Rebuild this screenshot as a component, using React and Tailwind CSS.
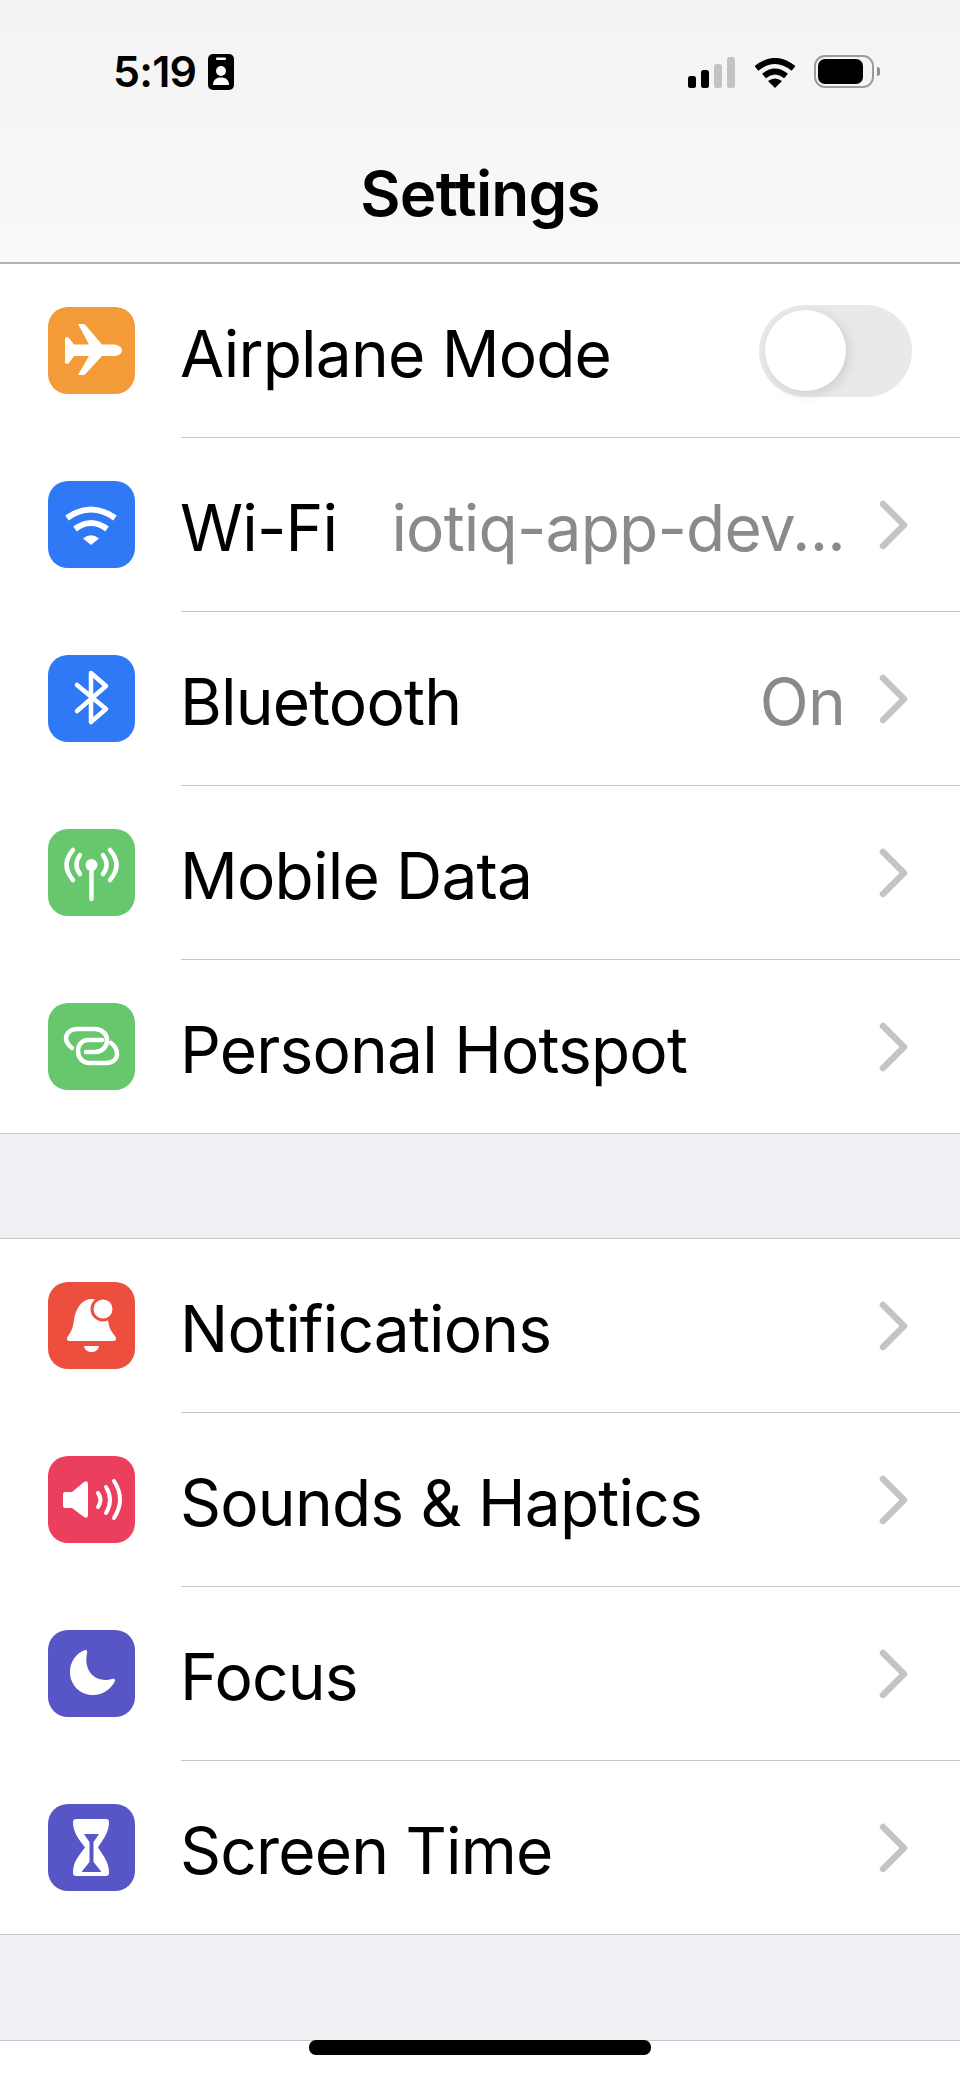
const iconPaths = {
  plane: (
    <path
      fill="#fff"
      d="M74 43.500C74 40 70 37.500 65 37.500H54L37 17.500Q36.500 17 35 17H30L41 37.500H26L21 31Q18 29 17 31.500V55.500Q18 58 21 56L26 49H41L30 68H35Q36.500 68 37 67.500L54 49H65C70 49 74 47 74 43.500Z"
    />
  ),
  wifi: (
    <g fill="none" stroke="#fff" strokeWidth="6">
      <path d="M19 37Q43 20 67 37" />
      <path d="M27 48Q43 36 59 48" />
      <path d="M35 57.500Q43 51 51 57.500L43 64Z" fill="#fff" stroke="none" />
    </g>
  ),
  bluetooth: (
    <path
      fill="none"
      stroke="#fff"
      strokeWidth="4.500"
      strokeLinecap="round"
      strokeLinejoin="round"
      d="M29 30L58 54L43 67V18L58 31L29 56"
    />
  ),
  mobile: (
    <g fill="none" stroke="#fff" strokeWidth="4.500" strokeLinecap="round">
      <circle cx="43.500" cy="36" r="6" fill="#fff" stroke="none" />
      <path d="M43.500 36V70" />
      <path d="M32 26Q25 36 32 45" />
      <path d="M55 26Q62 36 55 45" />
      <path d="M25 21Q12 36 25 51" />
      <path d="M62 21Q75 36 62 51" />
    </g>
  ),
  hotspot: (
    <g fill="none" stroke="#fff" strokeWidth="4.500" strokeLinecap="round">
      <path d="M24 45C20 42 18 38 18 35C18 30 23 26 29 26H47C54 26 59 31 59 37C59 44 54 49 47 49H38" />
      <path d="M54 37H40C34 37 30 42 30 48C30 55 35 60 41 60H58C65 60 69 56 69 51C69 47 67 43 63 40" />
    </g>
  ),
  bell: (
    <g>
      <path
        fill="#fff"
        d="M44 17C33 17 28 27 26 38C25 46 23 50 20 54C18 57 19 59 22 59H65C68 59 69 57 67 54C63 49 61 46 60 38C58 27 54 17 44 17Z"
      />
      <path fill="#fff" d="M36 64H51C50 72 37 72 36 64Z" />
      <circle cx="55" cy="27" r="12.500" fill="#ec4f3d" />
      <circle cx="55" cy="27" r="9.500" fill="#fff" />
    </g>
  ),
  sound: (
    <g>
      <path
        fill="#fff"
        d="M17 36H24L36 26Q40 24 40 28V59Q40 63 36 61L24 52H17Q15 52 15 50V38Q15 36 17 36Z"
      />
      <g fill="none" stroke="#fff" strokeWidth="4" strokeLinecap="round">
        <path d="M50 37Q55 44 50 51" />
        <path d="M58 31Q66 44 58 57" />
        <path d="M66 25Q78 43.500 66 62" />
      </g>
    </g>
  ),
  moon: (
    <path
      fill="#fff"
      d="M37 20C28 23 22 32 22 42C22 55 32 65 45 65C55 65 63 59 67 51C67.500 49 66 48.500 64 49C50 53 35 44 39 23C39.500 20.500 38.500 19.500 37 20Z"
    />
  ),
  screenTime: (
    <g>
      <path
        fill="#fff"
        d="M28 15H58Q61 15 61 18C61 28 56 34 50 43.500C56 53 61 58 61 69Q61 72 58 72H28Q25 72 25 69C25 58 30 53 37 43.500C30 34 25 28 25 18Q25 15 28 15Z"
      />
      <path
        fill="#5856c6"
        d="M36 30H51L47 36L45.500 38V58L52 66Q54 68 52 68H35Q33 68 35 66L41.500 58V38L40 36Z"
      />
    </g>
  ),
}

const group1 = [
  { label: 'Airplane Mode', icon: 'plane', bg: 'bg-[#f29b38]', toggle: true },
  { label: 'Wi-Fi', icon: 'wifi', bg: 'bg-[#3079f6]', value: 'iotiq-app-dev...' },
  { label: 'Bluetooth', icon: 'bluetooth', bg: 'bg-[#3079f6]', value: 'On' },
  { label: 'Mobile Data', icon: 'mobile', bg: 'bg-[#66c76c]' },
  { label: 'Personal Hotspot', icon: 'hotspot', bg: 'bg-[#66c76c]' },
]

const group2 = [
  { label: 'Notifications', icon: 'bell', bg: 'bg-[#ec4f3d]' },
  { label: 'Sounds & Haptics', icon: 'sound', bg: 'bg-[#ec3f5e]' },
  { label: 'Focus', icon: 'moon', bg: 'bg-[#5856c6]' },
  { label: 'Screen Time', icon: 'screenTime', bg: 'bg-[#5856c6]' },
]

function Chevron() {
  return (
    <svg width="30" height="50" viewBox="0 0 30 50" className="mr-[3px] shrink-0">
      <path
        d="M4 4L25 25L4 46"
        fill="none"
        stroke="#c4c4c6"
        strokeWidth="6.500"
        strokeLinecap="round"
        strokeLinejoin="round"
      />
    </svg>
  )
}

function Toggle() {
  return (
    <div className="flex h-[92px] w-[153px] items-center rounded-full bg-[#e9e9ea] pl-[6px]">
      <div className="h-[81px] w-[81px] rounded-full bg-white shadow-[3px_3px_12px_rgba(0,0,0,0.12)]" />
    </div>
  )
}

function Row({ item, last }) {
  return (
    <div className={`flex h-[174px] items-center bg-white pl-[48px] ${last ? 'border-b border-[#c6c6c8]' : ''}`}>
      <div className={`mb-[1px] h-[87px] w-[87px] shrink-0 rounded-[20px] ${item.bg}`}>
        <svg width="87" height="87" viewBox="0 0 87 87">
          {iconPaths[item.icon]}
        </svg>
      </div>
      <div
        className={`ml-[46px] flex h-full min-w-0 flex-1 items-center justify-between pr-[48px] ${
          last ? '' : 'border-b border-[#c6c6c8]'
        }`}
      >
        <span className="-ml-[1px] whitespace-nowrap pt-[6px] text-[64px] leading-none tracking-[-0.8px] text-black">{item.label}</span>
        {item.toggle ? (
          <Toggle />
        ) : (
          <div className="flex items-center gap-[34px]">
            {item.value && (
              <span className="whitespace-nowrap pt-[6px] text-[64px] leading-none tracking-[-0.8px] text-[#8a8a8e]">
                {item.value}
              </span>
            )}
            <Chevron />
          </div>
        )}
      </div>
    </div>
  )
}

export default function App() {
  return (
    <div className="relative h-[2079px] w-[960px] overflow-hidden bg-white font-['Inter','Liberation_Sans',sans-serif]">
      <header className="flex h-[264px] flex-col border-b-2 border-[#b4b4b4] bg-gradient-to-b from-[#f3f3f3] to-[#f9f9f9]">
        <div className="flex h-[93px] items-end justify-between pl-[113px] pr-[80px]">
          <div className="flex items-center gap-[12px]">
            <span className="text-[43px] font-semibold leading-none tracking-[-0.8px] text-black">5:19</span>
            <svg width="26" height="36" viewBox="0 0 26 36">
              <rect width="26" height="36" rx="5" fill="#000" />
              <rect x="8" y="3.500" width="10" height="2.500" rx="1" fill="#fff" />
              <circle cx="13" cy="17" r="5" fill="#fff" />
              <path d="M5 31C5 26 8 23.500 13 23.500S21 26 21 31Z" fill="#fff" />
            </svg>
          </div>
          <div className="flex items-end gap-[19px] pb-[5px]">
            <svg width="48" height="31" viewBox="0 0 48 31">
              <rect x="0" y="19" width="8" height="12" rx="2.500" fill="#000" />
              <rect x="13" y="13" width="8" height="18" rx="2.500" fill="#000" />
              <rect x="26" y="7" width="8" height="24" rx="2.500" fill="#c3c3c3" />
              <rect x="39" y="0" width="8" height="31" rx="2.500" fill="#c3c3c3" />
            </svg>
            <svg width="40" height="30" viewBox="0 0 40 30">
              <g fill="none" stroke="#000" strokeWidth="6">
                <path d="M1.500 10.500Q20 -4.500 38.500 10.500" />
                <path d="M9 18Q20 9 31 18" />
              </g>
              <path d="M13 23Q20 18 27 23L20 30Z" fill="#000" />
            </svg>
            <div className="flex items-center gap-[3px]">
              <div className="flex h-[33px] w-[60px] items-center rounded-[11px] border-[2px] border-[#9c9c9c] p-[2px]">
                <div className="h-full w-[45px] rounded-[7px] bg-black" />
              </div>
              <div className="h-[9px] w-[3px] rounded-r-full bg-[#8e8e8e]" />
            </div>
          </div>
        </div>
        <div className="flex flex-1 items-center justify-center pt-[32px]">
          <span className="text-[62px] font-semibold leading-none tracking-[-0.8px] text-black">Settings</span>
        </div>
      </header>

      <section>
        {group1.map((item, i) => (
          <Row key={item.label} item={item} last={i === group1.length - 1} />
        ))}
      </section>

      <div className="h-[105px] border-b border-[#c6c6c8] bg-[#f0f0f5]" />

      <section>
        {group2.map((item, i) => (
          <Row key={item.label} item={item} last={i === group2.length - 1} />
        ))}
      </section>

      <div className="h-[106px] border-b border-[#c6c6c8] bg-[#f0f0f5]" />

      <div className="absolute bottom-[24px] left-[309px] h-[15px] w-[342px] rounded-[7px] bg-black" />
    </div>
  )
}
